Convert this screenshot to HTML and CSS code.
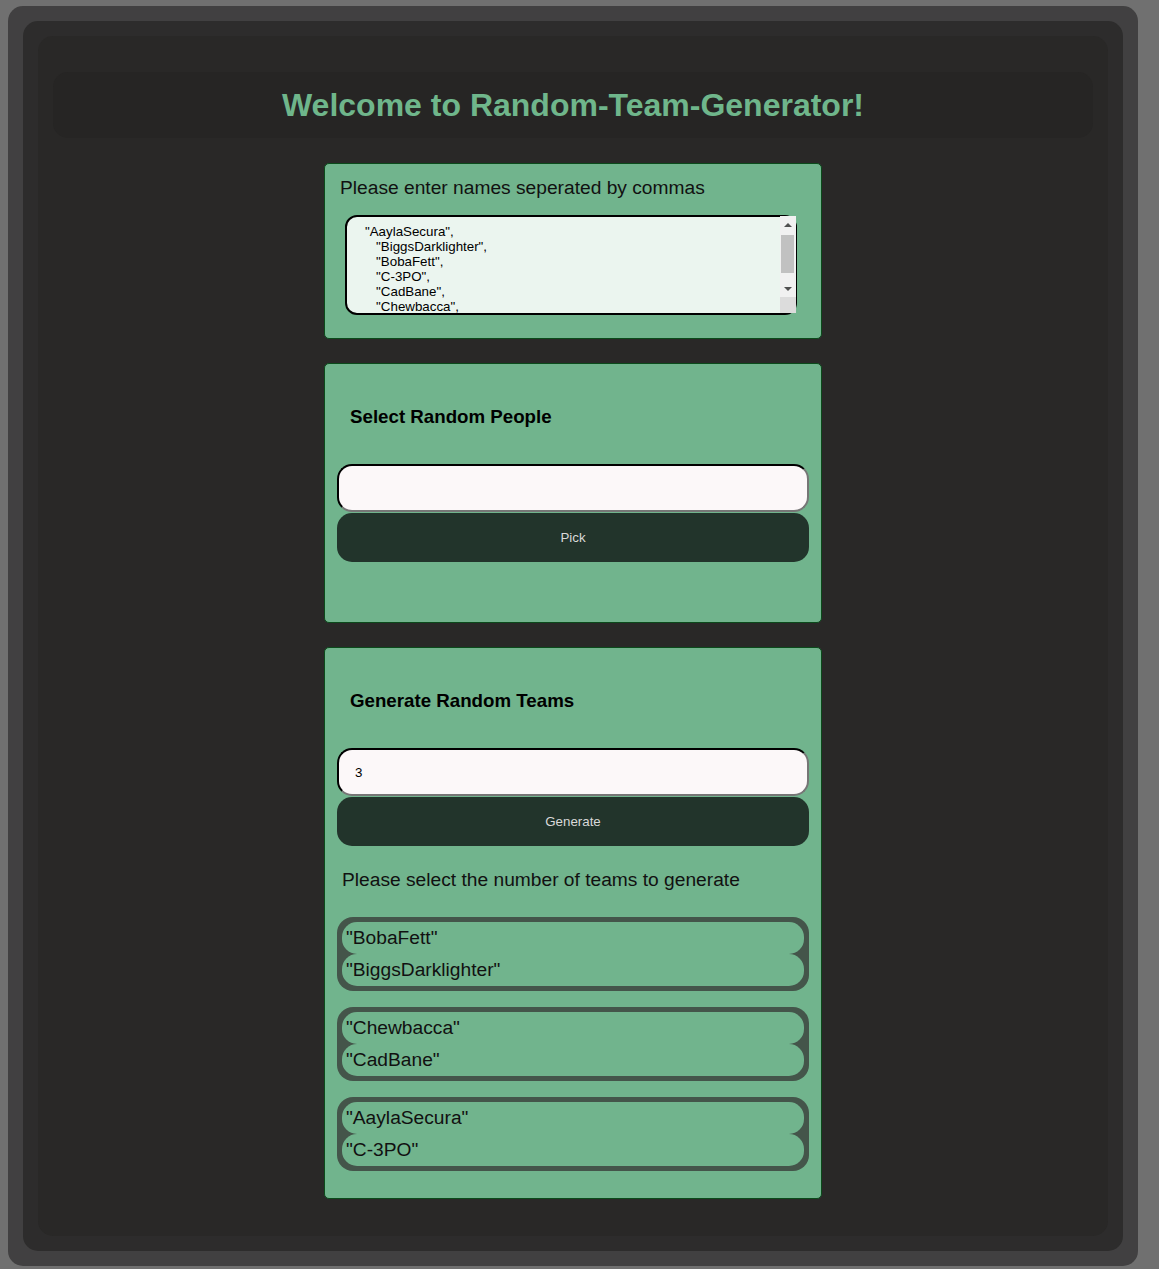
FILE: index.html
```html
<!DOCTYPE html>
<html lang="en">
<head>
<meta charset="utf-8">
<title>Random-Team-Generator</title>
<link rel="stylesheet" href="styles.css">
</head>
<body>
<div class="frame-outer">
  <div class="frame-mid">
    <div class="frame-inner">
      <header class="header">
        <h1 class="title">Welcome to Random-Team-Generator!</h1>
      </header>
      <main class="cards">
        <section class="card card-names">
          <p class="label">Please enter names seperated by commas</p>
          <div class="names-wrap">
            <textarea class="names">"AaylaSecura",
   "BiggsDarklighter",
   "BobaFett",
   "C-3PO",
   "CadBane",
   "Chewbacca",
   "Dooku",
   "Greedo",
   "HanSolo",
   "JabbaTheHutt",
   "JangoFett",
   "KitFisto"</textarea>
            <div class="fake-scroll" aria-hidden="true">
              <div class="sb-btn"><span class="arrow-up"></span></div>
              <div class="sb-track"><div class="sb-thumb"></div></div>
              <div class="sb-btn"><span class="arrow-down"></span></div>
              <div class="sb-corner"></div>
            </div>
          </div>
        </section>
        <section class="card card-tool card-pick">
          <h3 class="tool-title">Select Random People</h3>
          <input class="field" type="text" value="">
          <button class="action">Pick</button>
        </section>
        <section class="card card-tool">
          <h3 class="tool-title">Generate Random Teams</h3>
          <input class="field" type="text" value="3">
          <button class="action">Generate</button>
          <p class="hint">Please select the number of teams to generate</p>
          <div class="teams">
            <ul class="team">
              <li class="member">"BobaFett"</li>
              <li class="member">"BiggsDarklighter"</li>
            </ul>
            <ul class="team">
              <li class="member">"Chewbacca"</li>
              <li class="member">"CadBane"</li>
            </ul>
            <ul class="team">
              <li class="member">"AaylaSecura"</li>
              <li class="member">"C-3PO"</li>
            </ul>
          </div>
        </section>
      </main>
    </div>
  </div>
</div>
</body>
</html>
```

FILE: styles.css
```css
html {
  background: #707070;
}
body {
  margin: 6px 8px 3px;
  font-family: "Liberation Sans", Arial, sans-serif;
  background: #707070;
}
.frame-outer {
  width: 1130px;
  box-sizing: border-box;
  background: #414041;
  border-radius: 15px;
  padding: 15px;
}
.frame-mid {
  background: #2d2c2c;
  border-radius: 15px;
  padding: 15px;
}
.frame-inner {
  background: #292827;
  border-radius: 15px;
  padding: 36px 15px 37px;
}
.header {
  height: 66px;
  background: #262524;
  border-radius: 15px;
  display: flex;
  align-items: center;
  justify-content: center;
}
.title {
  margin: 0;
  font-size: 32px;
  line-height: 37px;
  font-weight: bold;
  color: #6fb68b;
}
.cards {
  margin-top: 25px;
  display: flex;
  flex-direction: column;
  align-items: center;
  gap: 24px;
}
.card {
  width: 498px;
  box-sizing: border-box;
  background: #71b48d;
  border: 1px solid #0b4a1b;
  border-radius: 5px;
}
.card-names {
  padding: 13px 0 23px;
}
.label {
  margin: 0 0 16px 15px;
  font-size: 19.2px;
  line-height: 22px;
  color: #111;
}
.names-wrap {
  position: relative;
  margin-left: 20px;
  width: 452px;
  height: 100px;
}
.names {
  display: block;
  width: 452px;
  height: 100px;
  box-sizing: border-box;
  border: 2px solid #000;
  border-radius: 12px;
  background: #ebf5ef;
  padding: 7px 0 0 18px;
  font-family: "Liberation Sans", Arial, sans-serif;
  font-size: 13.33px;
  line-height: 15px;
  color: #000;
  resize: none;
  overflow: hidden;
}
.fake-scroll {
  position: absolute;
  top: 1px;
  right: 1px;
  width: 16px;
  height: 97px;
  background: #f1f1f1;
  display: flex;
  flex-direction: column;
}
.sb-btn {
  height: 17px;
  display: flex;
  align-items: center;
  justify-content: center;
}
.arrow-up {
  width: 0;
  height: 0;
  border-left: 4px solid transparent;
  border-right: 4px solid transparent;
  border-bottom: 4px solid #505050;
}
.arrow-down {
  width: 0;
  height: 0;
  border-left: 4px solid transparent;
  border-right: 4px solid transparent;
  border-top: 4px solid #505050;
}
.sb-track {
  flex: 1;
}
.sb-thumb {
  margin: 2px 2px 0 1px;
  height: 38px;
  background: #c1c1c1;
}
.sb-corner {
  height: 16px;
  background: #dcdcdc;
}
.card-tool {
  padding: 42px 12px 27px;
  display: flex;
  flex-direction: column;
}
.card-pick {
  padding-bottom: 60px;
}
.tool-title {
  margin: 0 0 36px 13px;
  font-size: 18.72px;
  line-height: 22px;
  font-weight: bold;
  color: #000;
}
.field {
  height: 48px;
  box-sizing: border-box;
  margin: 0 0 1px;
  border: 2px inset #767676;
  border-top-color: #222;
  border-left-color: #222;
  border-radius: 15px;
  background: #fcf8f9;
  padding: 0 0 0 16px;
  font-family: "Liberation Sans", Arial, sans-serif;
  font-size: 13.33px;
  color: #000;
}
.action {
  height: 49px;
  border: none;
  border-radius: 15px;
  background: #22342b;
  color: #d9d9d9;
  font-family: "Liberation Sans", Arial, sans-serif;
  font-size: 13.33px;
}
.hint {
  margin: 23px 0 26px 5px;
  font-size: 19.2px;
  line-height: 22px;
  color: #111;
}
.teams {
  display: flex;
  flex-direction: column;
  gap: 16px;
}
.team {
  list-style: none;
  margin: 0;
  padding: 5px;
  background: #44554a;
  border-radius: 16px;
}
.member {
  height: 32px;
  box-sizing: border-box;
  background: #71b48d;
  border-radius: 15px;
  padding-left: 4px;
  font-size: 19.2px;
  line-height: 32px;
  color: #111;
}
```
